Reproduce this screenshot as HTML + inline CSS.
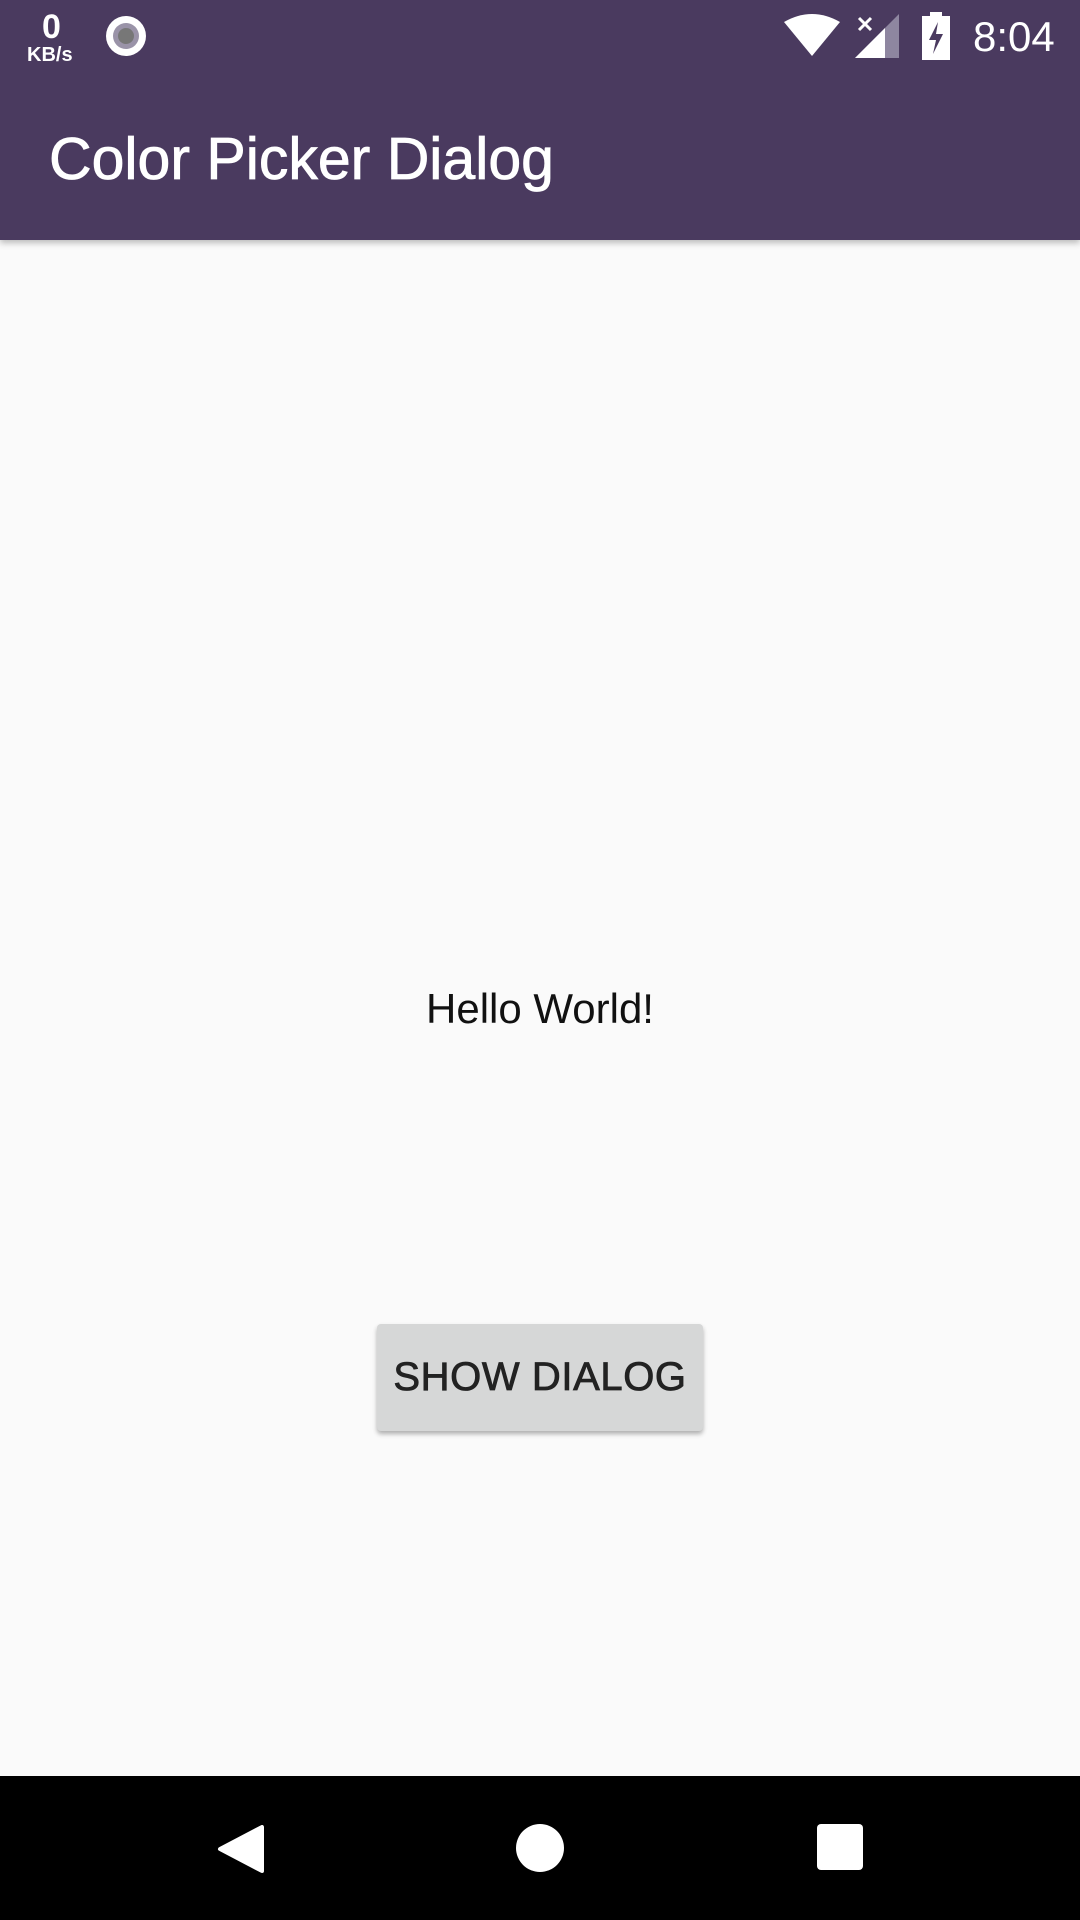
<!DOCTYPE html>
<html><head><meta charset="utf-8"><style>
html,body{margin:0;padding:0;width:1080px;height:1920px;overflow:hidden;background:#fafafa;font-family:"Liberation Sans",Roboto,sans-serif;position:relative}
.bar{position:absolute;left:0;top:0;width:1080px;height:240px;background:#4a3a5f;box-shadow:0 3px 6px rgba(0,0,0,.25)}
.title{position:absolute;left:49px;top:124px;font-size:59px;color:#fff;line-height:70px;-webkit-text-stroke:0.8px #fff}
.hello{position:absolute;left:0;width:1080px;top:985px;text-align:center;font-size:42px;color:#111}
.btn{position:absolute;left:377px;top:1324px;width:326px;height:107px;background:#d6d7d7;border-radius:4px;box-shadow:0 3px 5px rgba(0,0,0,.3);text-align:center;line-height:107px;font-size:40px;color:#222;letter-spacing:0.6px;-webkit-text-stroke:0.8px #222}
.nav{position:absolute;left:0;top:1776px;width:1080px;height:144px;background:#000}
.st{position:absolute;color:#fff}
</style></head><body>
<div class="bar">
<div class="st" style="left:42px;top:8px;font-size:34px;font-weight:bold">0</div>
<div class="st" style="left:27px;top:44px;font-size:20px;font-weight:bold">KB/s</div>
<svg class="st" style="left:104px;top:14px" width="44" height="44"><circle cx="22" cy="22" r="20" fill="#fff"/><circle cx="22" cy="22" r="13" fill="#9a93a8"/><circle cx="22" cy="22" r="8" fill="#777"/></svg>
<svg class="st" style="left:784px;top:14px" width="56" height="44"><path d="M0 8 Q28 -8 56 8 L28 42 Z" fill="#fff"/></svg>
<svg class="st" style="left:855px;top:14px" width="44" height="44"><path d="M44 0 V44 H0 Z" fill="#8e86a0"/><path d="M30 14 V44 H0 Z" fill="#fff"/><path d="M4 4 L16 16 M16 4 L4 16" stroke="#fff" stroke-width="3"/></svg>
<svg class="st" style="left:922px;top:12px" width="28" height="48"><rect x="8" y="0" width="12" height="5" fill="#fff"/><rect x="0" y="4" width="28" height="44" fill="#fff"/><path d="M16 10 L7 28 H14 L11 42 L21 22 H14 Z" fill="#4a3a5f"/></svg>
<div class="st" style="left:973px;top:13px;font-size:42px">8:04</div>
<div class="title">Color Picker Dialog</div>
</div>
<div class="hello">Hello World!</div>
<div class="btn">SHOW DIALOG</div>
<div class="nav">
<svg style="position:absolute;left:216px;top:49px" width="48" height="48"><path d="M46 2 V46 L4 24 Z" fill="#fff" stroke="#fff" stroke-width="4" stroke-linejoin="round"/></svg>
<svg style="position:absolute;left:516px;top:48px" width="48" height="48"><circle cx="24" cy="24" r="24" fill="#fff"/></svg>
<svg style="position:absolute;left:817px;top:48px" width="46" height="46"><rect x="0" y="0" width="46" height="46" rx="4" fill="#fff"/></svg>
</div>
</body></html>
